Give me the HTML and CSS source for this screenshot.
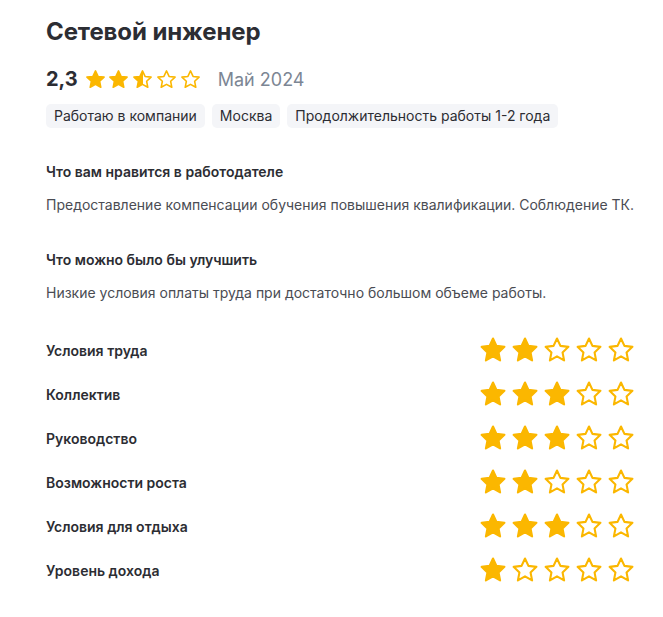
FILE: index.html
```html
<!DOCTYPE html>
<html lang="ru">
<head>
<meta charset="utf-8">
<link rel="stylesheet" href="styles.css">
</head>
<body>
<svg width="0" height="0" class="defs">
  <defs>
    <symbol id="star" viewBox="0 0 24 24"><path d="M12 2.2l2.95 6.3 6.85.8-5.05 4.75 1.33 6.85L12 17.5l-6.08 3.4 1.33-6.85L2.2 9.3l6.85-.8z"/></symbol>
    <linearGradient id="half" x1="0" x2="1" y1="0" y2="0">
      <stop offset="50%" stop-color="#fbb700"/>
      <stop offset="50%" stop-color="#fff"/>
    </linearGradient>
  </defs>
</svg>
<main class="review">
  <h1 class="title">Сетевой инженер</h1>
  <div class="summary">
    <span class="score">2,3</span>
    <span class="stars small">
      <svg class="s full"><use href="#star"/></svg>
      <svg class="s full"><use href="#star"/></svg>
      <svg class="s halfst"><use href="#star"/></svg>
      <svg class="s empty"><use href="#star"/></svg>
      <svg class="s empty"><use href="#star"/></svg>
    </span>
    <span class="date">Май 2024</span>
  </div>
  <div class="tags">
    <span class="tag">Работаю в компании</span>
    <span class="tag">Москва</span>
    <span class="tag">Продолжительность работы 1-2 года</span>
  </div>
  <section class="block">
    <h2 class="block-title">Что вам нравится в работодателе</h2>
    <p class="block-text">Предоставление компенсации обучения повышения квалификации. Соблюдение ТК.</p>
  </section>
  <section class="block">
    <h2 class="block-title">Что можно было бы улучшить</h2>
    <p class="block-text">Низкие условия оплаты труда при достаточно большом объеме работы.</p>
  </section>
  <div class="ratings">
    <div class="rating-row"><span class="label">Условия труда</span><span class="stars big">
      <svg class="s full"><use href="#star"/></svg><svg class="s full"><use href="#star"/></svg><svg class="s empty"><use href="#star"/></svg><svg class="s empty"><use href="#star"/></svg><svg class="s empty"><use href="#star"/></svg></span></div>
    <div class="rating-row"><span class="label">Коллектив</span><span class="stars big">
      <svg class="s full"><use href="#star"/></svg><svg class="s full"><use href="#star"/></svg><svg class="s full"><use href="#star"/></svg><svg class="s empty"><use href="#star"/></svg><svg class="s empty"><use href="#star"/></svg></span></div>
    <div class="rating-row"><span class="label">Руководство</span><span class="stars big">
      <svg class="s full"><use href="#star"/></svg><svg class="s full"><use href="#star"/></svg><svg class="s full"><use href="#star"/></svg><svg class="s empty"><use href="#star"/></svg><svg class="s empty"><use href="#star"/></svg></span></div>
    <div class="rating-row"><span class="label">Возможности роста</span><span class="stars big">
      <svg class="s full"><use href="#star"/></svg><svg class="s full"><use href="#star"/></svg><svg class="s empty"><use href="#star"/></svg><svg class="s empty"><use href="#star"/></svg><svg class="s empty"><use href="#star"/></svg></span></div>
    <div class="rating-row"><span class="label">Условия для отдыха</span><span class="stars big">
      <svg class="s full"><use href="#star"/></svg><svg class="s full"><use href="#star"/></svg><svg class="s full"><use href="#star"/></svg><svg class="s empty"><use href="#star"/></svg><svg class="s empty"><use href="#star"/></svg></span></div>
    <div class="rating-row"><span class="label">Уровень дохода</span><span class="stars big">
      <svg class="s full"><use href="#star"/></svg><svg class="s empty"><use href="#star"/></svg><svg class="s empty"><use href="#star"/></svg><svg class="s empty"><use href="#star"/></svg><svg class="s empty"><use href="#star"/></svg></span></div>
  </div>
</main>
</body>
</html>
```
FILE: styles.css
```css
* { box-sizing: border-box; }
html, body { margin: 0; padding: 0; background: #fff; }
body {
  font-family: Inter, "Noto Sans", sans-serif;
  color: #2c2d33;
}
.defs { position: absolute; width: 0; height: 0; }
.review {
  padding: 16px 0 0 46px;
}
.title {
  margin: 0;
  font-size: 24px;
  line-height: 32px;
  font-weight: 700;
  letter-spacing: -0.1px;
}
.summary {
  display: flex;
  align-items: center;
  margin-top: 16px;
  height: 30px;
}
.score {
  font-size: 20px;
  font-weight: 700;
  margin-right: 7px;
}
.stars { display: flex; }
.stars.small { gap: 2.75px; }
.stars.small .s { width: 21px; height: 21px; }
.date {
  margin-left: 17px;
  font-size: 18px;
  color: #7c8694;
}
.s { display: block; stroke: #fbb700; stroke-width: 1.8; stroke-linejoin: round; }
.s.full { fill: #fbb700; }
.s.empty { fill: #fff; }
.s.halfst { fill: url(#half); }
.tags {
  display: flex;
  gap: 7px;
  margin-top: 10px;
}
.tag {
  background: #f4f5f8;
  border-radius: 5px;
  padding: 0 8px;
  height: 24px;
  line-height: 24px;
  font-size: 14px;
  color: #2c2d33;
}
.block { margin-top: 34px; }
.block + .block { margin-top: 35px; }
.block-title {
  margin: 0;
  font-size: 14px;
  line-height: 20px;
  font-weight: 600;
}
.block-text {
  margin: 13px 0 0;
  font-size: 14px;
  line-height: 20px;
  color: #4a4c53;
  white-space: nowrap;
}
.ratings { margin-top: 25px; }
.rating-row {
  display: flex;
  align-items: center;
  justify-content: space-between;
  height: 44px;
  width: 589px;
}
.label {
  font-size: 14px;
  font-weight: 600;
}
.stars.big { gap: 4px; }
.stars.big .s { width: 28px; height: 28px; }
```
